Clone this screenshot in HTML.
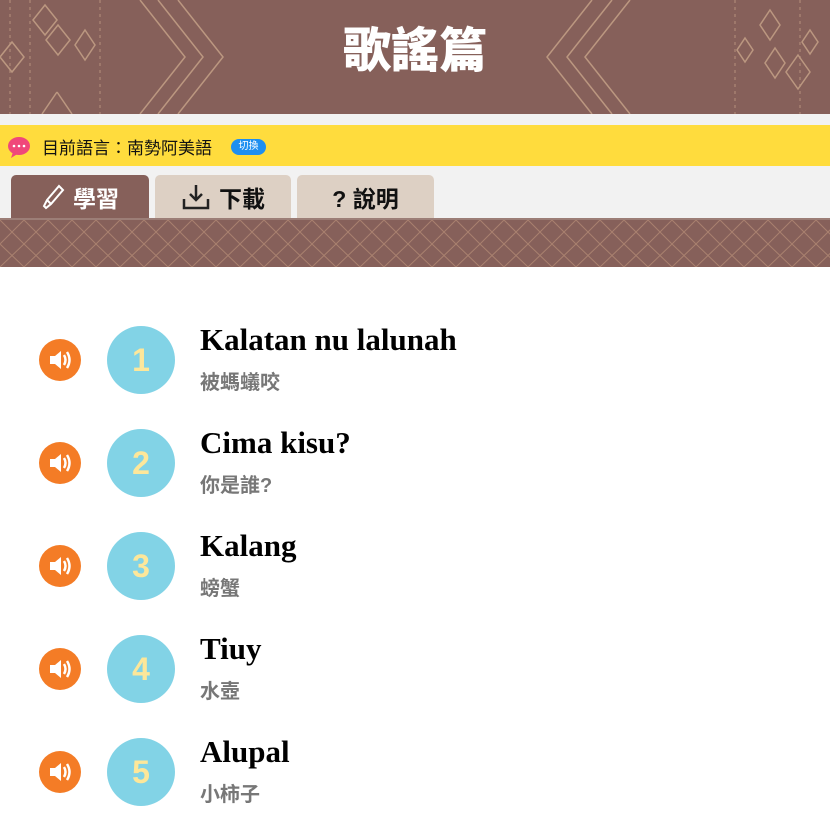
<!DOCTYPE html>
<html><head><meta charset="utf-8"><style>
*{margin:0;padding:0;box-sizing:border-box}
body{width:830px;height:837px;background:#fff;font-family:"Liberation Sans","Noto Sans CJK TC",sans-serif;position:relative;overflow:hidden}
.hdr{position:absolute;left:0;top:0;width:830px;height:114px;background:#86605a;overflow:hidden}
.hdr h1{position:absolute;left:0;right:0;top:22px;text-align:center;color:#fff;font-size:48px;font-weight:900;letter-spacing:0px;line-height:60px}
.gray{position:absolute;left:0;top:114px;width:830px;height:104px;background:#f2f2f2}
.yel{position:absolute;left:0;top:125px;width:830px;height:41px;background:#ffdc3d}
.yel .t{position:absolute;left:42px;top:9px;font-size:17px;color:#111}
.tab{position:absolute;top:175px;height:43px;border-radius:5px 5px 0 0;background:#ddd0c4;font-size:23px;font-weight:bold;color:#111;display:flex;align-items:center;justify-content:center;gap:8px}
.band{position:absolute;left:0;top:218px;width:830px;height:49px;background:#86605a;border-top:2px solid #9c7e77}
.row{position:absolute;left:0;width:830px;height:80px}
.sp{position:absolute;left:39px;top:21px;width:42px;height:42px;border-radius:50%;background:#f47c26}
.num{position:absolute;left:107px;top:8px;width:68px;height:68px;border-radius:50%;background:#82d3e6;color:#fde79a;font-weight:900;font-size:32px;text-align:center;line-height:68px;overflow:hidden}
.ti{position:absolute;left:200px;top:4px;font-family:"Liberation Serif",serif;font-weight:bold;font-size:31px;color:#000}
.zh{position:absolute;left:200px;top:48px;font-size:20px;color:#777;font-weight:bold}
</style></head><body>
<div class="hdr">
<svg width="830" height="114" style="position:absolute;left:0;top:0" fill="none" stroke="#c9a58a" stroke-width="1.5" opacity=".8">
<path d="M140 0 L185 57 L140 114 M158 0 L203 57 L158 114 M178 0 L223 57 L178 114"/>
<path d="M690 0 L645 57 L690 114 M672 0 L627 57 L672 114 M652 0 L607 57 L652 114" transform="translate(-60 0)"/>
<path d="M45 5 L57 20 L45 35 L33 20Z M58 25 L70 40 L58 55 L46 40Z M12 42 L24 57 L12 72 L0 57Z M85 30 L95 45 L85 60 L75 45Z M57 92 L72 114 M57 92 L42 114"/>
<path d="M770 10 L780 25 L770 40 L760 25Z M775 48 L785 63 L775 78 L765 63Z M745 38 L753 50 L745 62 L737 50Z M798 55 L810 72 L798 89 L786 72Z M810 30 L818 42 L810 54 L802 42Z"/>
<path d="M10 0V114 M30 0V114 M100 0V114 M735 0V114 M800 0V114" stroke-dasharray="3 4" opacity=".6"/>
</svg>
<h1>歌謠篇</h1></div>
<div class="gray"></div>
<div class="yel">
<svg style="position:absolute;left:7px;top:10px" width="26" height="24"><ellipse cx="12" cy="11" rx="11" ry="9" fill="#f0477a"/><path d="M6 17 L4 23 L12 18Z" fill="#f0477a"/><circle cx="7" cy="11" r="1.3" fill="#fff"/><circle cx="12" cy="11" r="1.3" fill="#fff"/><circle cx="17" cy="11" r="1.3" fill="#fff"/></svg>
<div class="t">目前語言：南勢阿美語</div>
<div style="position:absolute;left:231px;top:14px;width:35px;height:16px;border-radius:8px;background:#1e8ff0;color:#fff;font-size:10px;text-align:center;line-height:16px">切換</div>
</div>
<div class="tab" style="left:11px;width:138px;background:#86605a;color:#fff"><svg width="24" height="26" fill="none" stroke="#fff" stroke-width="2"><path d="M5 24 L3 22 L6 16 L18 2 L22 6 L10 20Z M6 16 L10 20"/></svg>學習</div>
<div class="tab" style="left:155px;width:136px"><svg width="30" height="28" fill="none" stroke="#222" stroke-width="2.5"><path d="M15 2V17 M9 11 L15 17 L21 11 M3 16V25H27V16"/></svg>下載</div>
<div class="tab" style="left:297px;width:137px">?&nbsp;說明</div>
<div class="band"><svg width="830" height="47" fill="none" stroke="#b88f78" stroke-width="1" opacity=".7">
<g id="p"><path d="M0 0 L24 24 L0 47 M24 0 L48 24 L24 47 M24 0 L0 24 L24 47 M48 0 L24 24 L48 47"/></g>
<use href="#p" x="48"/><use href="#p" x="96"/><use href="#p" x="144"/><use href="#p" x="192"/><use href="#p" x="240"/><use href="#p" x="288"/><use href="#p" x="336"/><use href="#p" x="384"/><use href="#p" x="432"/><use href="#p" x="480"/><use href="#p" x="528"/><use href="#p" x="576"/><use href="#p" x="624"/><use href="#p" x="672"/><use href="#p" x="720"/><use href="#p" x="768"/><use href="#p" x="816"/></svg></div>

<div class="row" style="top:318px"><div class="sp"><svg width="42" height="42"><path d="M11 17h5l6-5v18l-6-5h-5z" fill="#fff"/><path d="M25 16q3 5 0 10 M28 13q5 8 0 16" stroke="#fff" stroke-width="2.5" fill="none"/></svg></div><div class="num">1</div><div class="ti">Kalatan nu lalunah</div><div class="zh">被螞蟻咬</div></div>
<div class="row" style="top:421px"><div class="sp"><svg width="42" height="42"><path d="M11 17h5l6-5v18l-6-5h-5z" fill="#fff"/><path d="M25 16q3 5 0 10 M28 13q5 8 0 16" stroke="#fff" stroke-width="2.5" fill="none"/></svg></div><div class="num">2</div><div class="ti">Cima kisu?</div><div class="zh">你是誰?</div></div>
<div class="row" style="top:524px"><div class="sp"><svg width="42" height="42"><path d="M11 17h5l6-5v18l-6-5h-5z" fill="#fff"/><path d="M25 16q3 5 0 10 M28 13q5 8 0 16" stroke="#fff" stroke-width="2.5" fill="none"/></svg></div><div class="num">3</div><div class="ti">Kalang</div><div class="zh">螃蟹</div></div>
<div class="row" style="top:627px"><div class="sp"><svg width="42" height="42"><path d="M11 17h5l6-5v18l-6-5h-5z" fill="#fff"/><path d="M25 16q3 5 0 10 M28 13q5 8 0 16" stroke="#fff" stroke-width="2.5" fill="none"/></svg></div><div class="num">4</div><div class="ti">Tiuy</div><div class="zh">水壺</div></div>
<div class="row" style="top:730px"><div class="sp"><svg width="42" height="42"><path d="M11 17h5l6-5v18l-6-5h-5z" fill="#fff"/><path d="M25 16q3 5 0 10 M28 13q5 8 0 16" stroke="#fff" stroke-width="2.5" fill="none"/></svg></div><div class="num">5</div><div class="ti">Alupal</div><div class="zh">小柿子</div></div>
</body></html>
